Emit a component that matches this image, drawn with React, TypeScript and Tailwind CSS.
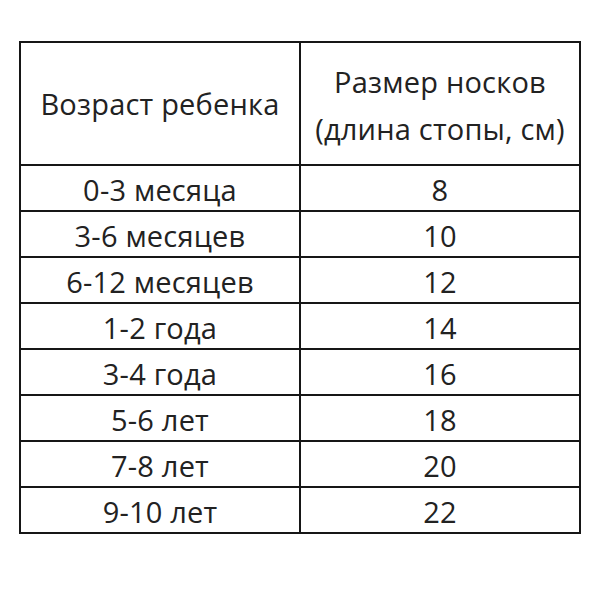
const rows: [string, string][] = [
  ['0-3 месяца', '8'],
  ['3-6 месяцев', '10'],
  ['6-12 месяцев', '12'],
  ['1-2 года', '14'],
  ['3-4 года', '16'],
  ['5-6 лет', '18'],
  ['7-8 лет', '20'],
  ['9-10 лет', '22'],
]

const App = () => {
  return (
    <div className="h-[604px] w-[604px] bg-white pl-[19px] pt-[41px] font-['Open_Sans',sans-serif] text-[#222]">
      <table className="w-[562px] table-fixed border-collapse border-2 border-[#161616]">
        <thead>
          <tr className="h-[123px]">
            <th className="border-2 border-[#161616] text-center align-middle text-[29px] font-normal tracking-[0.2px]">
              Возраст ребенка
            </th>
            <th className="border-2 border-[#161616] pt-[3px] text-center align-middle text-[29px] font-normal leading-[47px] tracking-[0.2px]">
              Размер носков
              <br />
              (длина стопы, см)
            </th>
          </tr>
        </thead>
        <tbody>
          {rows.map(([age, size]) => (
            <tr key={age} className="h-[46px]">
              <td className="border-2 border-[#161616] pt-[2px] text-center align-middle text-[29px] leading-none tracking-[0.2px]">{age}</td>
              <td className="border-2 border-[#161616] pt-[2px] text-center align-middle text-[29px] leading-none tracking-[0.2px]">{size}</td>
            </tr>
          ))}
        </tbody>
      </table>
    </div>
  )
}

export default App
